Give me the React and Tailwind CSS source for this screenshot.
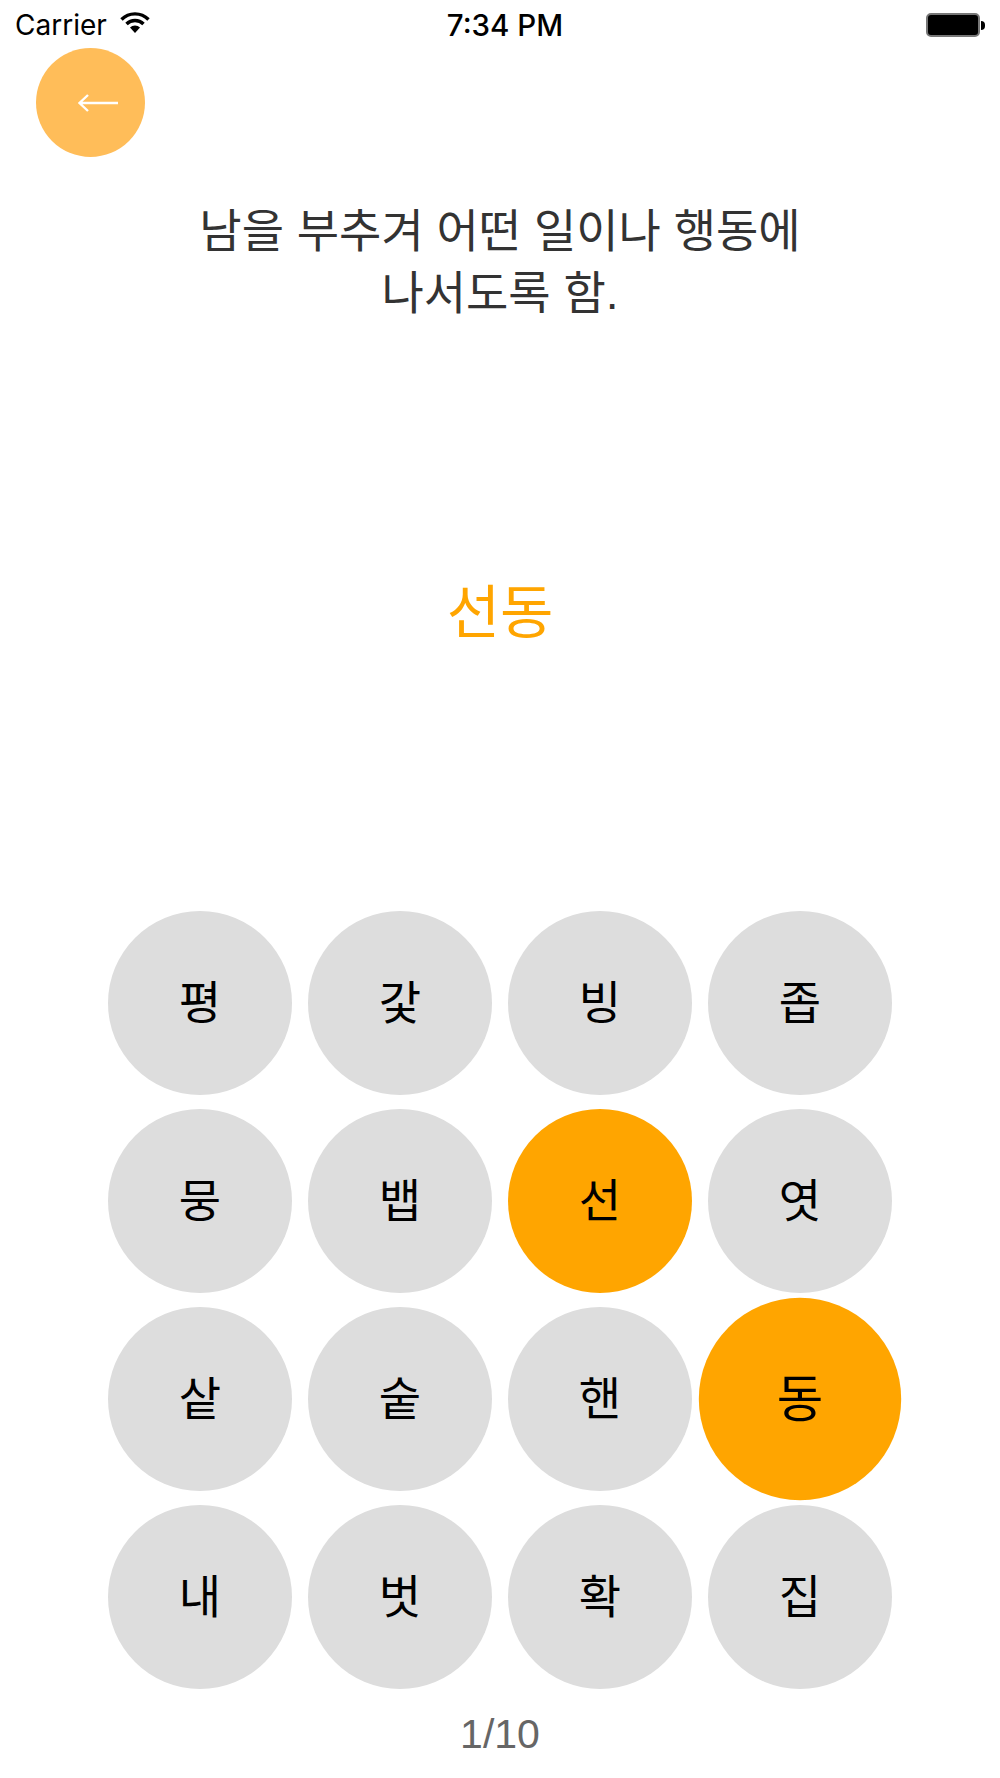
const ROWS = [
  ['평', '갗', '빙', '좁'],
  ['뭉', '뱁', '선', '엿'],
  ['샅', '숱', '핸', '동'],
  ['내', '벗', '확', '집'],
];
const PICKED = ['선', '동'];
const LAST = '동';

const kr = "font-['Liberation_Sans','Noto_Sans_CJK_KR',sans-serif]";

function StatusBar() {
  return (
    <div className="relative h-[50px] shrink-0 flex items-center justify-between pl-[15px] pr-[15px] text-black font-['Inter',sans-serif] text-[28px]">
      <div className="flex items-center gap-[13px]">
        <span>Carrier</span>
        <svg width="30" height="22" viewBox="0 0 30 22" className="-mt-[6px]">
          <path d="M1.5 8.5 A19 19 0 0 1 28.5 8.5" fill="none" stroke="#000" strokeWidth="3.4" />
          <path d="M6.5 13 A12 12 0 0 1 23.5 13" fill="none" stroke="#000" strokeWidth="3.4" />
          <path d="M10 16.5 A7 7 0 0 1 20 16.5 L15 22 Z" fill="#000" />
        </svg>
      </div>
      <span className="absolute left-[10px] right-0 text-center text-[29.5px] font-medium">7:34 PM</span>
      <div className="flex items-center gap-[1px]">
        <div className="w-[54px] h-[24px] rounded-[5px] border-2 border-[#777] bg-black" />
        <div className="w-[4px] h-[9px] rounded-r-full bg-black" />
      </div>
    </div>
  );
}

function Key({ ch }) {
  const on = PICKED.includes(ch);
  return (
    <div
      className={`w-[184px] h-[184px] rounded-full flex items-center justify-center text-[46px] text-black ${on ? 'bg-[#ffa500]' : 'bg-[#dddddd]'} ${ch === LAST ? 'scale-110' : ''}`}
    >
      {ch}
    </div>
  );
}

export default function App() {
  return (
    <div className={`w-[1000px] h-[1778px] bg-white flex flex-col overflow-hidden ${kr}`}>
      <StatusBar />
      <div className="-mt-[2px] ml-[36px] w-[109px] h-[109px] shrink-0 rounded-full bg-[#ffbd59] flex items-center justify-center">
        <svg width="42" height="20" viewBox="0 0 42 20" className="ml-[14px]">
          <path d="M41 10 H3 M11 2 L2.5 10 L11 18" fill="none" stroke="#fff" strokeWidth="2.4" />
        </svg>
      </div>
      <p className="mt-[43px] text-center text-[46px] leading-[62px] text-[#333333]">
        남을 부추겨 어떤 일이나 행동에
        <br />
        나서도록 함.
      </p>
      <p className="mt-[249px] text-center text-[58px] leading-[80px] text-[#ffa500]">선동</p>
      <div className="mt-[258px] flex flex-col items-center gap-[14px]">
        {ROWS.map((row) => (
          <div key={row.join('')} className="flex gap-[16px]">
            {row.map((ch) => (
              <Key key={ch} ch={ch} />
            ))}
          </div>
        ))}
      </div>
      <p className="mt-[20px] text-center text-[41px] leading-[50px] text-[#666666]">1/10</p>
    </div>
  );
}
